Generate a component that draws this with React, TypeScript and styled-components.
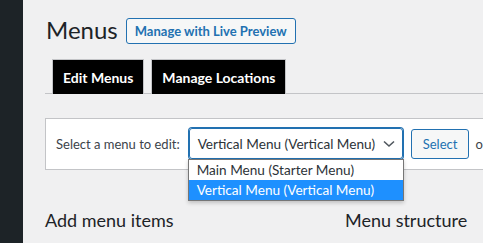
import React from "react";
import styled, { createGlobalStyle } from "styled-components";

const Global = createGlobalStyle`
  html, body { margin: 0; padding: 0; background: #f0f0f1; overflow: hidden; }
  body { font-family: Lato, "Noto Sans", sans-serif; color: #3c434a; }
  * { box-sizing: border-box; }
`;

const Page = styled.div`
  display: flex;
  width: 483px;
  height: 243px;
  overflow: hidden;
`;

const Sidebar = styled.div`
  flex: 0 0 23px;
  background: #1d2327;
`;

const Main = styled.div`
  flex: 0 0 auto;
  width: 700px;
  padding: 0 0 0 22px;
`;

const TitleRow = styled.div`
  display: flex;
  align-items: flex-start;
  gap: 8px;
  padding-top: 15px;
  height: 48px;
`;

const Title = styled.h1`
  margin: 0;
  font-size: 24px;
  font-weight: 400;
  line-height: 30px;
  color: #1d2327;
  padding-left: 1px;
`;

const ActionButton = styled.a`
  display: inline-flex;
  align-items: center;
  height: 26px;
  margin-top: 3px;
  padding: 0 8px;
  border: 1px solid #2271b1;
  border-radius: 3px;
  background: #f6f7f7;
  color: #2271b1;
  font-size: 13px;
  font-weight: 700;
  white-space: nowrap;
`;

const TabBar = styled.div`
  display: flex;
  margin-top: 11px;
  border-bottom: 1px solid #c3c4c7;
`;

const Tab = styled.div`
  margin-left: 7px;
  margin-bottom: -1px;
  height: 35px;
  padding: 0 10px;
  display: flex;
  align-items: center;
  background: #000;
  color: #fff;
  border: 1px solid #c3c4c7;
  border-bottom: none;
  font-size: 14px;
  font-weight: 700;
  white-space: nowrap;
`;

const Panel = styled.div`
  margin-top: 24px;
  background: #fff;
  border: 1px solid #c3c4c7;
  padding: 9px 10px 10px 10px;
  display: flex;
  align-items: center;
  white-space: nowrap;
`;

const Label = styled.span`
  font-size: 13px;
  color: #3c434a;
  margin-right: 9px;
`;

const SelectWrap = styled.div`
  position: relative;
  width: 214px;
`;

const SelectBox = styled.div`
  height: 31px;
  border: 1px solid #2271b1;
  box-shadow: 0 0 0 1px #2271b1;
  border-radius: 3px;
  display: flex;
  align-items: center;
  justify-content: space-between;
  gap: 6px;
  padding: 0 7px 0 8px;
  font-size: 13.6px;
  color: #2c3338;
`;

const Chevron = styled.svg`
  flex: 0 0 auto;
`;

const Dropdown = styled.div`
  position: absolute;
  top: 31px;
  left: -1px;
  width: 216px;
  background: #fff;
  border: 1px solid #767676;
  box-shadow: 0 2px 4px rgba(0, 0, 0, 0.2);
  z-index: 2;
`;

const Option = styled.div<{ $selected?: boolean }>`
  height: 20px;
  line-height: 20px;
  padding: 0 8px;
  font-size: 13.6px;
  background: ${(p) => (p.$selected ? "#1e90ff" : "#fff")};
  color: ${(p) => (p.$selected ? "#fff" : "#2c3338")};
`;

const SelectButton = styled.button`
  margin-left: 8px;
  height: 30px;
  padding: 0 11px;
  border: 1px solid #2271b1;
  border-radius: 3px;
  background: #f6f7f7;
  color: #2271b1;
  font-family: inherit;
  font-size: 13px;
`;

const OrText = styled.span`
  margin-left: 6px;
  font-size: 13px;
  color: #3c434a;
`;

const Columns = styled.div`
  display: grid;
  grid-template-columns: 300px 1fr;
  margin-top: 39px;
`;

const ColumnTitle = styled.h2`
  margin: 0;
  font-size: 18px;
  font-weight: 400;
  color: #1d2327;
`;

export default function App() {
  return (
    <>
      <Global />
      <Page>
        <Sidebar />
        <Main>
          <TitleRow>
            <Title>Menus</Title>
            <ActionButton>Manage with Live Preview</ActionButton>
          </TitleRow>
          <TabBar>
            <Tab>Edit Menus</Tab>
            <Tab>Manage Locations</Tab>
          </TabBar>
          <Panel>
            <Label>Select a menu to edit:</Label>
            <SelectWrap>
              <SelectBox>
                <span>Vertical Menu (Vertical Menu)</span>
                <Chevron width="12" height="8" viewBox="0 0 12 8" fill="none">
                  <path d="M1 1.5 L6 6 L11 1.5" stroke="#50575e" strokeWidth="1.6" />
                </Chevron>
              </SelectBox>
              <Dropdown>
                <Option>Main Menu (Starter Menu)</Option>
                <Option $selected>Vertical Menu (Vertical Menu)</Option>
              </Dropdown>
            </SelectWrap>
            <SelectButton>Select</SelectButton>
            <OrText>or</OrText>
          </Panel>
          <Columns>
            <ColumnTitle>Add menu items</ColumnTitle>
            <ColumnTitle>Menu structure</ColumnTitle>
          </Columns>
        </Main>
      </Page>
    </>
  );
}
